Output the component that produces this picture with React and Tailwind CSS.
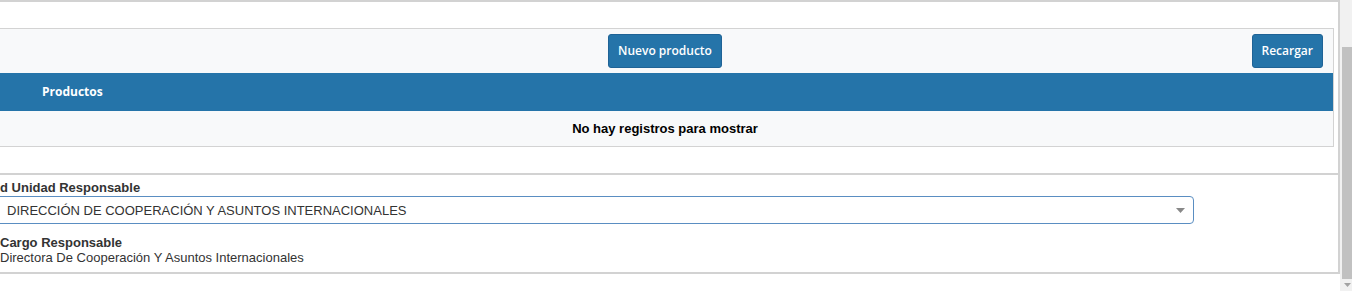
import React from 'react';

const sans = { fontFamily: '"Liberation Sans", Arial, sans-serif' };

/**
 * Filled button used in the product toolbar.
 */
function ToolbarButton({ children }) {
  return (
    <button
      type="button"
      className="h-[34px] rounded-[3px] border border-[#1f6396] bg-[#2574a9] px-[9px] font-['Open_Sans',sans-serif] text-[12px] font-semibold text-white"
    >
      {children}
    </button>
  );
}

/**
 * Products table with its toolbar, header and empty row.
 */
function ProductTable() {
  return (
    <div className="ml-[-4px] mr-[4px] border border-[#d3d3d3] bg-[#f8f9fa]">
      {/* Toolbar */}
      <div className="grid h-[44px] grid-cols-[1fr_auto_1fr] items-start pt-[5px]">
        <div />
        <ToolbarButton>Nuevo producto</ToolbarButton>
        <div className="justify-self-end pr-[10px]">
          <ToolbarButton>Recargar</ToolbarButton>
        </div>
      </div>

      {/* Header */}
      <div className="flex h-[38px] items-center bg-[#2574a9] pl-[45px] font-['Open_Sans',sans-serif] text-[12px] font-bold text-white">
        Productos
      </div>

      {/* Empty row */}
      <div
        className="flex h-[35px] items-center justify-center text-[13px] font-bold text-black"
        style={sans}
      >
        No hay registros para mostrar
      </div>
    </div>
  );
}

export default function App() {
  return (
    <div className="flex h-[291px] w-[1352px] overflow-hidden bg-white" style={sans}>
      <main className="w-[1340px] overflow-hidden">
        {/* Upper panel */}
        <section className="border-t-2 border-r-2 border-b-2 border-[#d2d2d2] pt-[26px] pb-[26px]">
          <ProductTable />
        </section>

        {/* Lower panel */}
        <section className="border-r-2 border-b-2 border-[#d2d2d2] pt-[5px] pb-[7px] text-[13px] leading-[15px] text-[#333]">
          <div className="font-bold">d Unidad Responsable</div>
          <div className="mt-[1px] ml-[-10px] flex h-[28px] w-[1204px] items-center justify-between rounded-[4px] border border-[#5a8ec2] pr-[8px] pl-[16px]">
            <span>DIRECCIÓN DE COOPERACIÓN Y ASUNTOS INTERNACIONALES</span>
            <svg width="9" height="5" viewBox="0 0 9 5" aria-hidden="true">
              <path d="M0 0h9L4.5 5z" fill="#888" />
            </svg>
          </div>
          <div className="mt-[11px] font-bold">Cargo Responsable</div>
          <div>Directora De Cooperación Y Asuntos Internacionales</div>
        </section>
      </main>

      {/* Scrollbar */}
      <div className="flex w-[12px] flex-col bg-[#f1f1f1]">
        <div className="h-[47px]" />
        <div className="ml-[2px] h-[232px] bg-[#c1c1c1]" />
        <div className="flex flex-1 items-center justify-center pl-[2px]">
          <svg width="7" height="4" viewBox="0 0 7 4" aria-hidden="true">
            <path d="M0 0h7L3.5 4z" fill="#a3a3a3" />
          </svg>
        </div>
      </div>
    </div>
  );
}
